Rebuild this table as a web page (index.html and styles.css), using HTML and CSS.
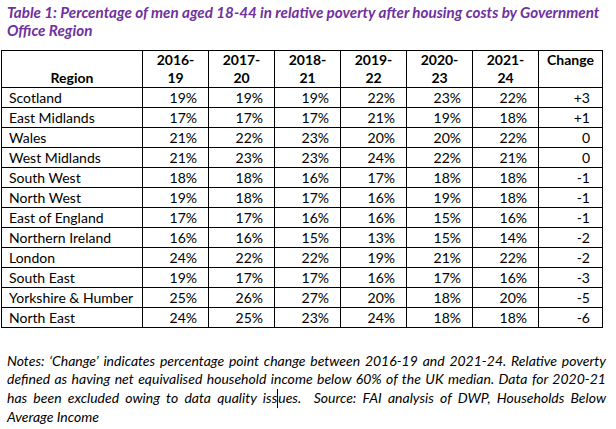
FILE: index.html
```html
<!DOCTYPE html>
<html>
<head>
<meta charset="utf-8">
<link rel="stylesheet" href="styles.css">
</head>
<body>
<div class="page">
  <div class="title">
    <div class="tline">Table 1: Percentage of men aged 18-44 in relative poverty after housing costs by Government</div>
    <div class="tline">Office Region</div>
  </div>
  <table class="data">
    <colgroup>
      <col class="c-region"><col class="c-year"><col class="c-year"><col class="c-year"><col class="c-year"><col class="c-year"><col class="c-year"><col class="c-change">
    </colgroup>
    <thead>
      <tr>
        <th class="h-region">Region</th>
        <th>2016-<br>19</th>
        <th>2017-<br>20</th>
        <th>2018-<br>21</th>
        <th>2019-<br>22</th>
        <th>2020-<br>23</th>
        <th>2021-<br>24</th>
        <th>Change</th>
      </tr>
    </thead>
    <tbody>
      <tr><td>Scotland</td><td>19%</td><td>19%</td><td>19%</td><td>22%</td><td>23%</td><td>22%</td><td>+3</td></tr>
      <tr><td>East Midlands</td><td>17%</td><td>17%</td><td>17%</td><td>21%</td><td>19%</td><td>18%</td><td>+1</td></tr>
      <tr><td>Wales</td><td>21%</td><td>22%</td><td>23%</td><td>20%</td><td>20%</td><td>22%</td><td>0</td></tr>
      <tr><td>West Midlands</td><td>21%</td><td>23%</td><td>23%</td><td>24%</td><td>22%</td><td>21%</td><td>0</td></tr>
      <tr><td>South West</td><td>18%</td><td>18%</td><td>16%</td><td>17%</td><td>18%</td><td>18%</td><td>-1</td></tr>
      <tr><td>North West</td><td>19%</td><td>18%</td><td>17%</td><td>16%</td><td>19%</td><td>18%</td><td>-1</td></tr>
      <tr><td>East of England</td><td>17%</td><td>17%</td><td>16%</td><td>16%</td><td>15%</td><td>16%</td><td>-1</td></tr>
      <tr><td>Northern Ireland</td><td>16%</td><td>16%</td><td>15%</td><td>13%</td><td>15%</td><td>14%</td><td>-2</td></tr>
      <tr><td>London</td><td>24%</td><td>22%</td><td>22%</td><td>19%</td><td>21%</td><td>22%</td><td>-2</td></tr>
      <tr><td>South East</td><td>19%</td><td>17%</td><td>17%</td><td>16%</td><td>17%</td><td>16%</td><td>-3</td></tr>
      <tr><td>Yorkshire &amp; Humber</td><td>25%</td><td>26%</td><td>27%</td><td>20%</td><td>18%</td><td>20%</td><td>-5</td></tr>
      <tr><td>North East</td><td>24%</td><td>25%</td><td>23%</td><td>24%</td><td>18%</td><td>18%</td><td>-6</td></tr>
    </tbody>
  </table>
  <div class="notes">
    <div class="nline">Notes: ‘Change’ indicates percentage point change between 2016-19 and 2021-24. Relative poverty</div>
    <div class="nline">defined as having net equivalised household income below 60% of the UK median. Data for 2020-21</div>
    <div class="nline">has been excluded owing to data quality iss<span class="caret"></span>ues.&nbsp; Source: FAI analysis of DWP, Households Below</div>
    <div class="nline last">Average Income</div>
  </div>
</div>
</body>
</html>
```
FILE: styles.css
```css
html, body {
  margin: 0;
  padding: 0;
  background: #ffffff;
}
.page {
  font-family: "Lato", "Liberation Sans", sans-serif;
  font-size: 14px;
  color: #000000;
  width: 616px;
  height: 429px;
  overflow: hidden;
}
.title {
  padding: 3px 0 0 7px;
  color: #7030a0;
  font-weight: bold;
  font-style: italic;
  font-size: 15.2px;
  line-height: 18px;
}
.tline {
  white-space: nowrap;
}
.data {
  margin: 11px 0 0 1px;
  border-collapse: collapse;
  table-layout: fixed;
  width: 602px;
  border: 1.5px solid #000;
}
.c-region { width: 141px; }
.c-year { width: 66px; }
.c-change { width: 64px; }
.data th, .data td {
  border: 1px solid #000;
  padding: 0;
  line-height: 18px;
}
.data th {
  font-weight: bold;
  text-align: center;
  vertical-align: top;
  height: 35px;
}
.data th.h-region {
  vertical-align: bottom;
}
.data td {
  height: 19px;
  text-align: right;
  padding-right: 11px;
}
.data td:first-child {
  text-align: left;
  padding: 0 0 0 7px;
}
.data td:last-child {
  padding-right: 12px;
}
.notes {
  margin: 24px 10px 0 7px;
  font-style: italic;
  line-height: 18.3px;
}
.nline {
  text-align: justify;
  text-align-last: justify;
  white-space: nowrap;
}
.nline.last {
  text-align-last: left;
}
.caret {
  display: inline-block;
  width: 1px;
  height: 19px;
  background: #000;
  vertical-align: -5px;
}
```
